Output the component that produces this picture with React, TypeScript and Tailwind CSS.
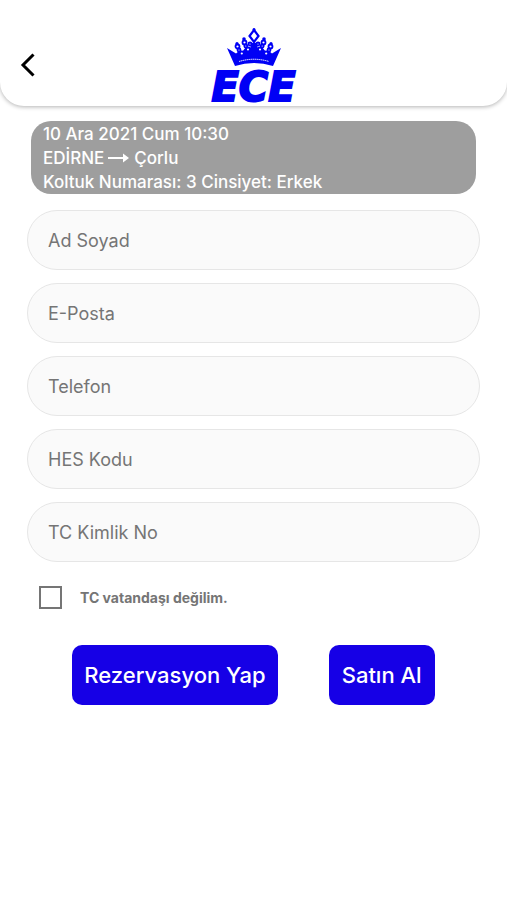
import React, { useState } from "react";

const fields = [
  { id: "name", label: "Ad Soyad", type: "text" },
  { id: "email", label: "E-Posta", type: "email" },
  { id: "phone", label: "Telefon", type: "tel" },
  { id: "hes", label: "HES Kodu", type: "text" },
  { id: "tc", label: "TC Kimlik No", type: "text" },
];

function Crown() {
  return (
    <svg viewBox="0 0 54 38" className="h-[38px] w-[54px]" fill="#0000f5" aria-hidden="true">
      {/* Base with the two outer points */}
      <path d="M0 20 L9 25.500 L12 23 L15 24 L19 19 L23 20 L27 15 L31 20 L35 19 L39 24 L42 23 L45 25.500 L54 20 L46 38 Q27 32 8 38 Z" />
      <path d="M12 33.500 Q27 29 42 33.500" fill="none" stroke="#fff" strokeWidth="1" strokeDasharray="1.500 0.500" />
      {/* Top diamond */}
      <path d="M27 2 L31.500 8 L27 14 L22.500 8 Z" fill="#fff" stroke="#0000f5" strokeWidth="2.200" />
      <circle cx="27" cy="1.500" r="1.500" />
      <circle cx="27" cy="18" r="3.500" />
      {/* Beads */}
      <g fill="#fff" stroke="#0000f5" strokeWidth="1.800">
        <circle cx="17.500" cy="14.500" r="2" />
        <circle cx="36.500" cy="14.500" r="2" />
        <circle cx="18.800" cy="18" r="1.500" />
        <circle cx="35.200" cy="18" r="1.500" />
        <circle cx="21" cy="21.500" r="2" />
        <circle cx="33" cy="21.500" r="2" />
        <circle cx="23" cy="16" r="1.500" />
        <circle cx="31" cy="16" r="1.500" />
        <circle cx="10.500" cy="18.500" r="2" />
        <circle cx="43.500" cy="18.500" r="2" />
        <circle cx="12" cy="22" r="1.500" />
        <circle cx="42" cy="22" r="1.500" />
        <circle cx="14.800" cy="25.500" r="2" />
        <circle cx="39.200" cy="25.500" r="2" />
      </g>
      <circle cx="17" cy="11" r="1.800" />
      <circle cx="37" cy="11" r="1.800" />
      <circle cx="10" cy="15.500" r="1.600" />
      <circle cx="44" cy="15.500" r="1.600" />
    </svg>
  );
}

function Logo() {
  return (
    <div className="flex flex-col items-center">
      <Crown />
      <span className="pt-0.5 font-['DejaVu_Sans',sans-serif] text-[40px] leading-[38px] font-bold text-[#0000f5] italic [-webkit-text-stroke:2px_#0000f5]">
        ECE
      </span>
    </div>
  );
}

export default function App() {
  const [notCitizen, setNotCitizen] = useState(false);

  return (
    <div className="min-h-screen bg-white font-['Inter','Liberation_Sans',sans-serif]">
      {/* Header */}
      <header className="grid grid-cols-[60px_1fr_60px] rounded-b-3xl bg-white pt-7 shadow-[0_1px_4px_rgba(0,0,0,0.3)]">
        <button type="button" aria-label="Geri" className="flex items-center pb-1 pl-5">
          <svg viewBox="0 0 16 24" className="h-6 w-4" fill="none" stroke="#000" strokeWidth="3" aria-hidden="true">
            <path d="M13.500 1.500 L3 12 L13.500 22.500" />
          </svg>
        </button>
        <Logo />
      </header>

      <main className="px-[27px] pt-[15px]">
        {/* Trip info */}
        <section className="mx-1 rounded-[20px] bg-[#9e9e9e] px-3 pt-px text-[17px] leading-6 font-medium text-white">
          <p>10 Ara 2021 Cum 10:30</p>
          <p className="flex items-center gap-[3px]">
            EDİRNE
            <svg viewBox="0 0 24 12" className="h-3 w-6" aria-hidden="true">
              <path d="M1 6 H18" stroke="#fff" strokeWidth="2" />
              <path d="M16 1.500 L22 6 L16 10.500 Z" fill="#fff" />
            </svg>
            Çorlu
          </p>
          <p>Koltuk Numarası: 3 Cinsiyet: Erkek</p>
        </section>

        <form onSubmit={(e) => e.preventDefault()}>
          <div className="mt-4 flex flex-col gap-[13px]">
            {fields.map((field) => (
              <input
                key={field.id}
                id={field.id}
                type={field.type}
                aria-label={field.label}
                placeholder={field.label}
                className="h-[60px] w-full rounded-full border border-[#e6e6e6] bg-[#fafafa] px-5 text-lg text-[#333] outline-none placeholder:text-[#757575]"
              />
            ))}
          </div>

          <div className="mt-6 flex items-center gap-[18px] pl-3">
            <input
              id="notCitizen"
              type="checkbox"
              checked={notCitizen}
              onChange={(e) => setNotCitizen(e.target.checked)}
              className="size-[23px] appearance-none border-2 border-[#757575] checked:bg-[#757575]"
            />
            <label htmlFor="notCitizen" className="text-sm font-bold text-[#757575]">
              TC vatandaşı değilim.
            </label>
          </div>

          {/* Actions */}
          <div className="mt-9 flex justify-center gap-[51px] text-[22px] font-medium text-white">
            <button type="submit" className="h-[60px] rounded-[10px] bg-[#1600e6] px-3">
              Rezervasyon Yap
            </button>
            <button type="button" className="h-[60px] rounded-[10px] bg-[#1600e6] px-[13px]">
              Satın Al
            </button>
          </div>
        </form>
      </main>
    </div>
  );
}
